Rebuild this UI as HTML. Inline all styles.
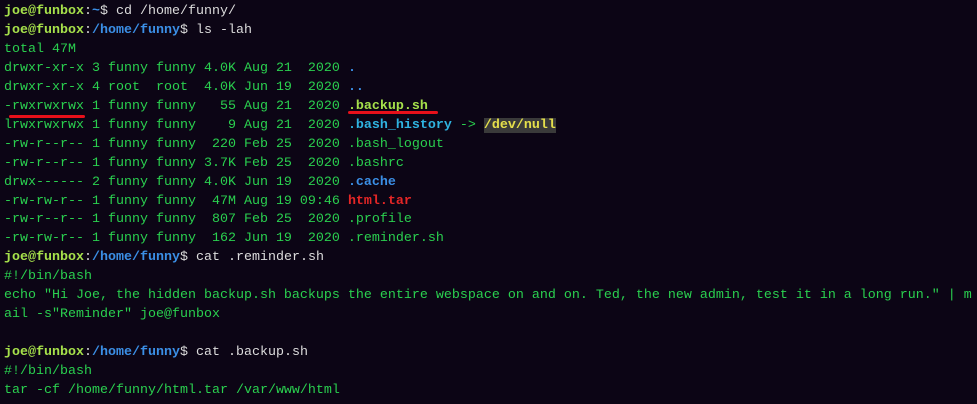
<!DOCTYPE html>
<html><head><meta charset="utf-8"><style>
html,body{margin:0;padding:0;background:#0c0515;width:977px;height:404px;overflow:hidden}
pre{margin:0;padding:3px 0 0 4px;font-family:"Liberation Mono",monospace;font-size:13.33px;line-height:18.95px;color:#2ad04f;white-space:pre}
.u{color:#a6e14b;font-weight:bold}.b{color:#3b8fe6;font-weight:bold}.w{color:#dcdcdc}
.c{color:#3b8fe6;font-weight:bold}.r{color:#e52626;font-weight:bold}.g{color:#a6e14b;font-weight:bold}
.cy{color:#2fb3e0;font-weight:bold}.hl{background:#3a3a3a;color:#e6e04b;font-weight:bold}
.line{position:absolute;height:3px;background:#e8101a;border-radius:2px}
</style></head><body>
<pre><span class="u">joe@funbox</span><span class="w">:</span><span class="b">~</span><span class="w">$</span><span class="w"> cd /home/funny/</span>
<span class="u">joe@funbox</span><span class="w">:</span><span class="b">/home/funny</span><span class="w">$ ls -lah</span>
total 47M
drwxr-xr-x 3 funny funny 4.0K Aug 21  2020 <span class="c">.</span>
drwxr-xr-x 4 root  root  4.0K Jun 19  2020 <span class="c">..</span>
-rwxrwxrwx 1 funny funny   55 Aug 21  2020 <span class="g">.backup.sh</span>
lrwxrwxrwx 1 funny funny    9 Aug 21  2020 <span class="cy">.bash_history</span> -&gt; <span class="hl">/dev/null</span>
-rw-r--r-- 1 funny funny  220 Feb 25  2020 .bash_logout
-rw-r--r-- 1 funny funny 3.7K Feb 25  2020 .bashrc
drwx------ 2 funny funny 4.0K Jun 19  2020 <span class="c">.cache</span>
-rw-rw-r-- 1 funny funny  47M Aug 19 09:46 <span class="r">html.tar</span>
-rw-r--r-- 1 funny funny  807 Feb 25  2020 .profile
-rw-rw-r-- 1 funny funny  162 Jun 19  2020 .reminder.sh
<span class="u">joe@funbox</span><span class="w">:</span><span class="b">/home/funny</span><span class="w">$ cat .reminder.sh</span>
#!/bin/bash
echo "Hi Joe, the hidden backup.sh backups the entire webspace on and on. Ted, the new admin, test it in a long run." | m
ail -s"Reminder" joe@funbox

<span class="u">joe@funbox</span><span class="w">:</span><span class="b">/home/funny</span><span class="w">$ cat .backup.sh</span>
#!/bin/bash
tar -cf /home/funny/html.tar /var/www/html
</pre>
<div class="line" style="left:9px;top:115px;width:76px"></div>
<div class="line" style="left:348px;top:111px;width:90px"></div>
</body></html>
